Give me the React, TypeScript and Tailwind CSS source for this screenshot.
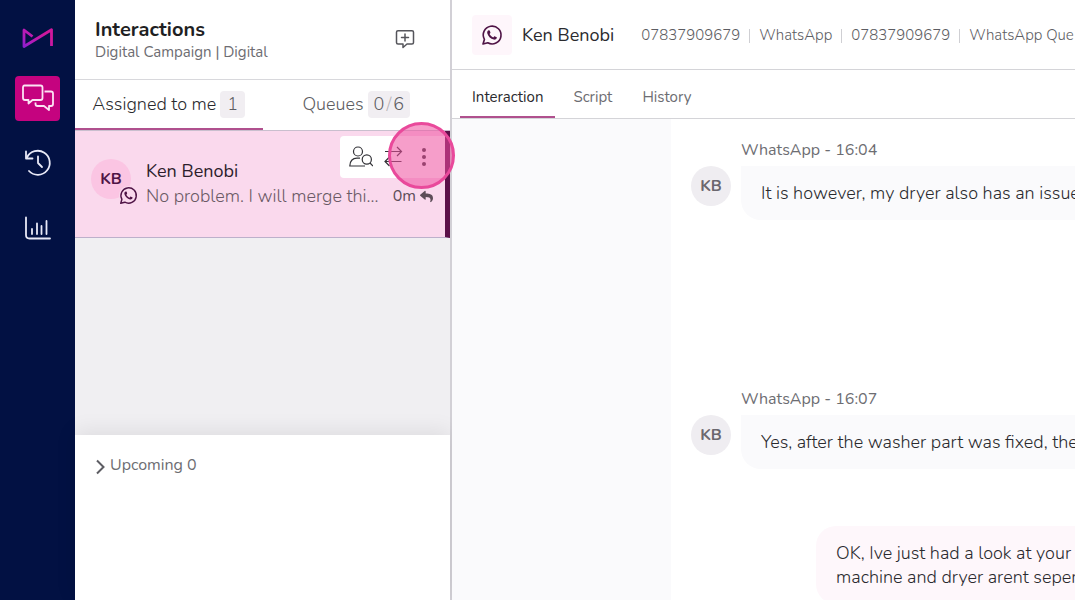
import React from "react";
import { FaReply } from "react-icons/fa";

const contactDetails = ["07837909679", "WhatsApp", "07837909679", "WhatsApp Que"];

const incoming = [
  { id: 1, meta: "WhatsApp - 16:04", text: "It is however, my dryer also has an issue" },
  { id: 2, meta: "WhatsApp - 16:07", text: "Yes, after the washer part was fixed, the" },
];

function Logo() {
  return (
    <svg className="h-6 w-8" viewBox="0 0 32 24" fill="none" strokeWidth="2.8" strokeLinejoin="round">
      <defs>
        <linearGradient id="logo" x1="0" y1="24" x2="20" y2="4" gradientUnits="userSpaceOnUse">
          <stop offset="0" stopColor="#7a1fd6" />
          <stop offset="0.4" stopColor="#b01cbc" />
          <stop offset="1" stopColor="#d0189c" />
        </linearGradient>
      </defs>
      <path d="M10.500 10.500 L2 4 V20.500 L29.500 3.800 V20" stroke="url(#logo)" />
    </svg>
  );
}

function ChatsIcon() {
  return (
    <svg className="h-8 w-8" viewBox="0 1.5 32 32" fill="none" stroke="#fbe3f3" strokeWidth="1.8" strokeLinejoin="round">
      <path d="M2.500 4 H18.500 Q20.500 4 20.500 6 V16.500 Q20.500 18.500 18.500 18.500 H10.500 L6.500 22 V18.500 H3 Q1 18.500 1 16.500 V6 Q1 4 2.500 4 Z" />
      <path d="M22.500 10 H29 Q31 10 31 12 V22.500 Q31 24.500 29 24.500 H27 V28.500 L22 24.500 H15.500 Q13.500 24.500 13.500 22.500 V21" />
    </svg>
  );
}

function HistoryIcon() {
  return (
    <svg className="h-8 w-8" viewBox="0 1.5 32 32" fill="none" stroke="#e8e9f7" strokeWidth="1.8" strokeLinecap="round" strokeLinejoin="round">
      <path d="M5 11 A12 12 0 1 1 7 24.500" />
      <path d="M4 5 V12 H10.500" />
      <path d="M16 10 V16.500 L20 20.500" />
    </svg>
  );
}

function ChartIcon() {
  return (
    <svg className="h-8 w-8" viewBox="0 0.5 32 32" fill="none" stroke="#e8e9f7" strokeWidth="1.8" strokeLinecap="round">
      <path d="M4 5 V22.500 Q4 26 7.500 26 H28" />
      <path d="M10 16.500 V21.500 M15 11 V21.500 M19.500 13.500 V21.500 M24.500 8.500 V21.500" />
    </svg>
  );
}

function WhatsAppIcon({ className }: { className: string }) {
  return (
    <svg className={className} viewBox="0 0 24 24" fill="none">
      <path
        d="M2.200 21.800 L3.700 16.800 A9.700 9.700 0 1 1 7.400 20.500 Z"
        stroke="#4f1446"
        strokeWidth="1.8"
        strokeLinejoin="round"
      />
      <path
        d="M8.300 6.900 C8.900 6.700 9.400 6.900 9.600 7.400 L10.200 8.900 C10.400 9.500 10.300 9.800 10 10.200 L9.300 11 C10.200 12.700 11.600 14 13.300 14.700 L14.100 13.800 C14.400 13.400 14.700 13.300 15.200 13.500 L16.700 14.200 C17.200 14.400 17.400 14.700 17.200 15.300 C16.700 16.700 15.300 17.300 13.900 17 C10.600 16.200 7.800 13.500 6.900 10.300 C6.500 8.900 7 7.400 8.300 6.900 Z"
        fill="#4f1446"
      />
    </svg>
  );
}

function NewChatIcon() {
  return (
    <svg className="h-5 w-5" viewBox="0 1 20 20" fill="none" stroke="#55555b" strokeWidth="1.5" strokeLinecap="round" strokeLinejoin="round">
      <path d="M3 1.800 H17 Q18.500 1.800 18.500 3.300 V13.500 Q18.500 15 17 15 H12 L8 18.500 V15 H3 Q1.500 15 1.500 13.500 V3.300 Q1.500 1.800 3 1.800 Z" />
      <path d="M10 5 V12 M6.500 8.500 H13.500" />
    </svg>
  );
}

function UserSearchIcon() {
  return (
    <svg className="h-6 w-6" viewBox="0 0 24 24" fill="none" stroke="#333338" strokeWidth="1.2">
      <circle cx="9" cy="6.500" r="4.500" />
      <path d="M11 13.200 H8 C3.500 13.200 0.800 16 0.800 21 H16" />
      <circle cx="17.800" cy="14.500" r="4.600" />
      <path d="M21 18 L24 21" />
    </svg>
  );
}

function TransferIcon() {
  return (
    <svg className="h-6 w-5" viewBox="0 0 20 24" fill="none" stroke="#333338" strokeWidth="1.2">
      <path d="M1 6.500 H17.500 M13 2 L17.500 6.500 L13 11" />
      <path d="M17.500 16.500 H1 M5.500 12 L1 16.500 L5.500 21" />
    </svg>
  );
}

function Sidebar() {
  return (
    <nav className="flex w-[75px] shrink-0 flex-col items-center gap-5 bg-[#021143] pt-[26px]">
      <a href="#" aria-label="Home">
        <Logo />
      </a>
      <button aria-label="Interactions" className="mt-[6px] flex h-[45px] w-[45px] items-center justify-center rounded bg-[#c5037f]">
        <ChatsIcon />
      </button>
      <button aria-label="History" className="flex h-[45px] w-[45px] items-center justify-center">
        <HistoryIcon />
      </button>
      <button aria-label="Reports" className="flex h-[45px] w-[45px] items-center justify-center">
        <ChartIcon />
      </button>
    </nav>
  );
}

function InteractionItem() {
  return (
    <article className="relative flex h-[107px] items-center border-r-5 border-b border-r-[#5c1049] border-b-[#bdb0cb] bg-[#fad9ed] pl-4">
      <div className="relative mb-[10px] flex h-10 w-10 shrink-0 items-center justify-center rounded-full bg-[#fbc5e3] font-bold text-[#4f1446]">
        KB
        <div className="absolute top-[27px] left-7 rounded-full bg-[#fad9ed]">
          <WhatsAppIcon className="h-[19px] w-[19px]" />
        </div>
      </div>
      <div className="min-w-0 flex-1 pr-3 pl-[15px]">
        <h2 className="text-[18px] leading-[25px] text-[#2c1d2b]">Ken Benobi</h2>
        <div className="flex items-center leading-[25px] text-[#6b5a65]">
          <p className="flex-1 truncate text-[18px] font-light">No problem. I will merge thi...</p>
          <span className="text-[16px] text-[#5d4d58]">0m</span>
          <FaReply className="ml-1 h-[13px] w-[13px] text-[#5d4d58]" />
        </div>
      </div>

      {/* Hover actions */}
      <div className="absolute top-[5px] right-0 flex h-[42px] items-center rounded-l bg-white pr-[13px] pl-[9px]">
        <button aria-label="Find contact">
          <UserSearchIcon />
        </button>
        <button aria-label="Transfer" className="ml-[11px]">
          <TransferIcon />
        </button>
        <button aria-label="More" className="ml-3 flex w-4 flex-col items-center gap-[3px]">
          <i className="h-1 w-1 rounded-full bg-[#333338]" />
          <i className="h-1 w-1 rounded-full bg-[#333338]" />
          <i className="h-1 w-1 rounded-full bg-[#333338]" />
        </button>
      </div>
      <div className="pointer-events-none absolute -top-[9px] -right-[10px] z-10 h-[67px] w-[67px] rounded-full border-[3px] border-[#e9499b] bg-[#ef4f9f]/55" />
    </article>
  );
}

function InteractionsPanel() {
  return (
    <aside className="flex w-[377px] shrink-0 flex-col border-r-2 border-[#d2d0d6] bg-white">
      <header className="flex h-20 items-center justify-between border-b border-[#d8d8dc] pr-[35px] pl-5">
        <div>
          <h1 className="text-[20px] leading-6 font-bold text-[#1f1f23]">Interactions</h1>
          <p className="text-[15px] leading-5 text-[#6d6d72]">Digital Campaign | Digital</p>
        </div>
        <button aria-label="New interaction">
          <NewChatIcon />
        </button>
      </header>

      <div className="flex h-[51px] border-b border-[#c9bfce] text-[18px] font-light">
        <button className="flex flex-1 items-center justify-center gap-1 border-b-2 border-[#b0508e] text-[#2a2a2e]">
          Assigned to me
          <span className="rounded bg-[#f1eef2] px-[7px] py-[2px] leading-[23px] text-[#5d5d62]">1</span>
        </button>
        <button className="flex flex-1 items-center justify-center gap-1 border-b-2 border-transparent text-[#5d5d62]">
          Queues
          <span className="rounded bg-[#f1eef2] px-[6px] py-[2px] leading-[23px]">
            0<span className="mx-[2px] text-[#b5b3b8]">/</span>6
          </span>
        </button>
      </div>

      <InteractionItem />
      <div className="flex-1 bg-[#f0eff2]" />

      <button className="flex h-[165px] items-start gap-[5px] pt-[18px] pl-5 text-[16px] leading-6 text-[#6d6d72] shadow-[0_-4px_20px_rgba(0,0,0,0.08)]">
        <svg className="mt-[6px] h-4 w-[10px]" viewBox="0 0 10 16" fill="none" stroke="#5d5d63" strokeWidth="2">
          <path d="M2 1.500 L8.500 8 L2 14.500" />
        </svg>
        Upcoming 0
      </button>
    </aside>
  );
}

function Conversation() {
  return (
    <main className="flex min-w-0 flex-1 flex-col overflow-hidden bg-white whitespace-nowrap">
      <header className="flex h-[70px] shrink-0 items-center border-b border-[#d4d4d8] pl-5">
        <div className="flex h-10 w-10 shrink-0 items-center justify-center rounded bg-[#fef6fb]">
          <WhatsAppIcon className="h-[22px] w-[22px]" />
        </div>
        <h2 className="ml-[10px] pt-[2px] text-[18px] text-[#2a2a2e]">Ken Benobi</h2>
        <ul className="ml-[27px] flex pt-[2px] text-[15px] font-light text-[#5d5d62]">
          {contactDetails.map((detail, i) => (
            <li key={i} className="flex items-center">
              {i > 0 && <span className="mx-[9px] h-[14px] w-px bg-[#cfcfd3]" />}
              {detail}
            </li>
          ))}
        </ul>
      </header>

      <div className="flex h-[49px] shrink-0 gap-[6px] border-b border-[#d4d4d8] pl-2 text-[15px] text-[#6d6d72]">
        <button className="border-b-2 border-[#b0508e] px-3 pt-2 text-[#2a2a2e]">Interaction</button>
        <button className="border-b-2 border-transparent px-3 pt-2">Script</button>
        <button className="border-b-2 border-transparent px-3 pt-2">History</button>
      </div>

      <div className="flex flex-1 text-[16px]">
        <div className="w-[219px] shrink-0 bg-[#fafafc]" />
        <div className="min-w-0 flex-1 overflow-hidden pt-[19px] pl-5">
          {incoming.map((message) => (
            <div key={message.id} className="h-[249px]">
              <p className="pl-[50px] leading-6 text-[#6d6d72]">{message.meta}</p>
              <div className="mt-1 flex items-start gap-[10px]">
                <div className="flex h-10 w-10 shrink-0 items-center justify-center rounded-full bg-[#efedf1] font-bold text-[#6b676e]">
                  KB
                </div>
                <p className="flex-1 rounded-bl-[20px] bg-[#fafafc] px-5 py-[15px] text-[18px] leading-6 font-light text-[#2a2a2e]">
                  {message.text}
                </p>
              </div>
            </div>
          ))}
          <p className="-mt-[110px] ml-[125px] rounded-l-[20px] bg-[#fef7fb] px-5 py-[15px] text-[18px] leading-6 font-light text-[#2a2a2e]">
            OK, Ive just had a look at your t
            <br />
            machine and dryer arent seper
          </p>
        </div>
      </div>
    </main>
  );
}

export default function App() {
  return (
    <div className="flex h-screen overflow-hidden font-['Nunito','Open_Sans',sans-serif]">
      <Sidebar />
      <InteractionsPanel />
      <Conversation />
    </div>
  );
}
